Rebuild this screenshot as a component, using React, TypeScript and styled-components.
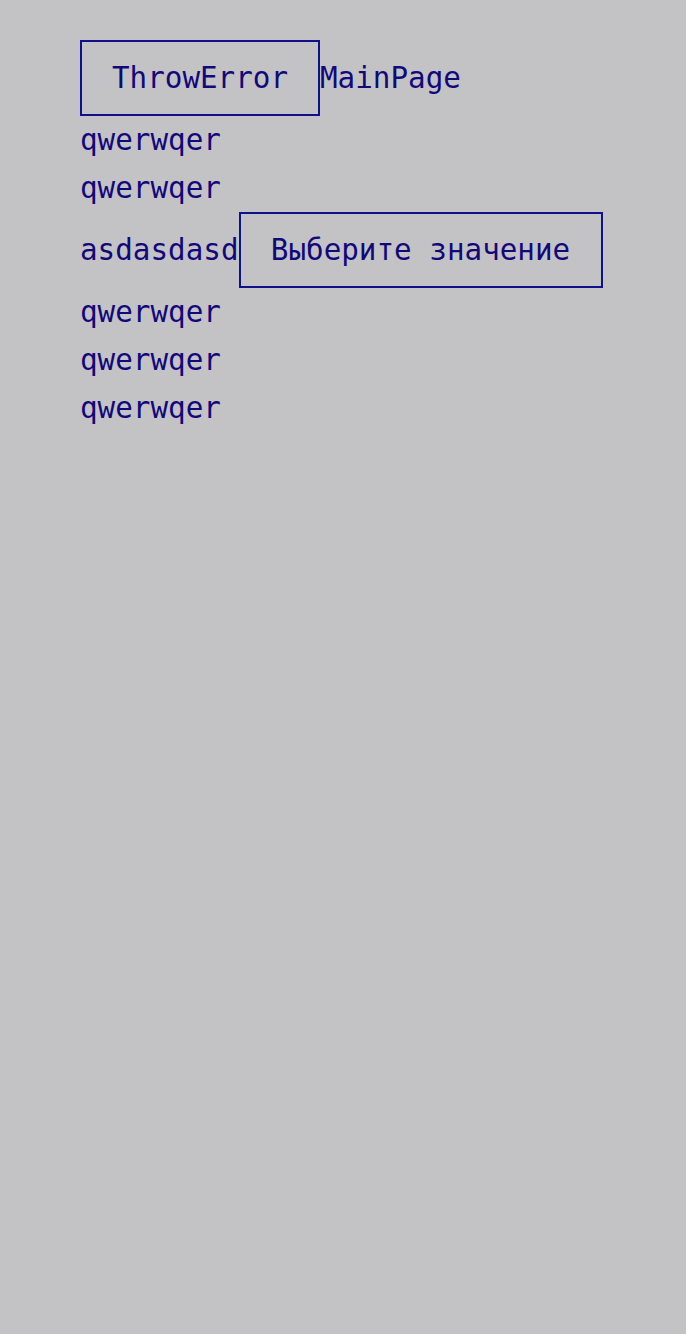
import React from "react";
import styled, { createGlobalStyle } from "styled-components";

const Global = createGlobalStyle`
  html, body {
    margin: 0;
    padding: 0;
    background: #c3c3c5;
    min-height: 100%;
  }
  body {
    font-family: "DejaVu Sans Mono", "Liberation Mono", monospace;
    color: #12087a;
  }
`;

const Page = styled.div`
  min-height: 1334px;
  box-sizing: border-box;
  padding: 40px 80px;
  background: #c3c3c5;
  font-family: "DejaVu Sans Mono", "Liberation Mono", monospace;
  font-size: 29.25px;
  color: #12087a;
`;

const Header = styled.div`
  display: flex;
  align-items: center;
`;

const BoxButton = styled.button<{ $w: number }>`
  box-sizing: border-box;
  height: 76px;
  width: ${(p) => p.$w}px;
  border: 2px solid #10108c;
  background: transparent;
  color: inherit;
  font: inherit;
  padding: 0;
  display: flex;
  align-items: center;
  justify-content: center;
  line-height: 48px;
  cursor: pointer;
`;

const Title = styled.span`
  line-height: 48px;
`;

const Line = styled.div`
  line-height: 48px;
  height: 48px;
`;

const Row = styled.div`
  display: flex;
  align-items: center;
  height: 76px;
`;

export default function App() {
  return (
    <>
      <Global />
      <Page>
        <Header>
          <BoxButton $w={240}>ThrowError</BoxButton>
          <Title>MainPage</Title>
        </Header>
        <Line>qwerwqer</Line>
        <Line>qwerwqer</Line>
        <Row>
          <Title>asdasdasd</Title>
          <BoxButton $w={364}>Выберите значение</BoxButton>
        </Row>
        <Line>qwerwqer</Line>
        <Line>qwerwqer</Line>
        <Line>qwerwqer</Line>
      </Page>
    </>
  );
}
